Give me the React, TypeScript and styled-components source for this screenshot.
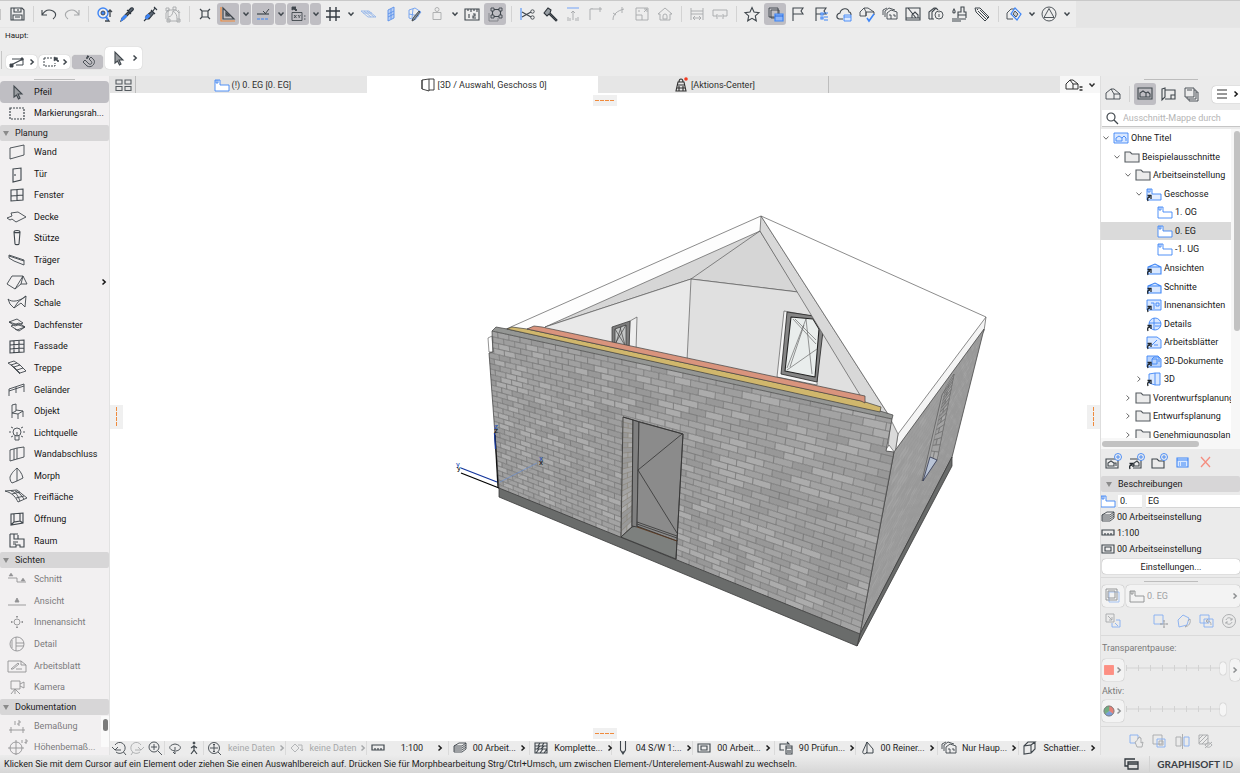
import React from "react";
import styled, { createGlobalStyle, css } from "styled-components";

/* ---------- theme values ---------- */

const INK = "#3f464c";
const BLUE = "#3f86f6";
const ORANGE = "#f08a3c";

const GlobalStyle = createGlobalStyle`
  *, *::before, *::after { box-sizing: border-box; }
  body { margin: 0; background: #ececec; }
  button, input { font: inherit; color: inherit; }
  button { border: 0; padding: 0; background: none; }
  ul { list-style: none; margin: 0; padding: 0; }
`;

/* ---------- icons ---------- */

type Shape = [d: string, stroke?: string, fill?: string, width?: number];

const ring = (x: number, y: number, r: number) =>
  `M${x - r} ${y}a${r} ${r} 0 1 0 ${2 * r} 0a${r} ${r} 0 1 0 ${-2 * r} 0z`;

const storey = "M3 5h5v5h9v6H3zM4 5v3h2V5";
const folder = "M3 5h5l2 2h7v8H3z";
const alias: Shape = ["M4 17c-1-3 0-4 2-4M3.500 11.500h3.500v3.500", "#20262c", undefined, 1.3];
const cube = "M4 8l7-1v8l-7 1zM4 8l4-4h7l-4 3M15 4v7l-4 4";
const layers = "M4 8l5-3h7l-4 3zM4 8v2h8l4-3V5M4 10v2h8l4-3V7M4 12v2h8l4-3V9";

const ICONS: Record<string, Shape[]> = {
  save: [["M4 4h11l2 2v10H4zM7 4v4h7V4M6 16v-5h9v5M8 13h5M11 5v2", undefined, undefined, 1.1]],
  undo: [["M3 6v5h5M3 11C6 6 10 5 14 7s3 6 0 8", undefined, undefined, 1.1]],
  redo: [["M17 6v5h-5M17 11C14 6 10 5 6 7s-3 6 0 8", undefined, undefined, 1.1]],
  find: [[ring(9, 9, 5), BLUE, undefined, 1.4], [ring(9, 9, 2), INK, BLUE], ["M12 13l3 4h-4M16 13V6M14 8l2-2 2 2", INK, undefined, 1.3], ["M12 13l2 3", BLUE, undefined, 2]],
  pipette: [["M14 4c2-1 3 1 2 2l-3 3-2-2zM10 6l4 4M11 8l2 1-6 6-3 2 1-3z", "#2f3740", "#5c6773", 1.1], ["M8 11l2 1-4 4-2 1 1-3z", BLUE, BLUE]],
  syringe: [["M14 3l3 3M15 4l-2 3M11 6l4 4M12 7l2 2-5 6-3 0-2 2 2-2 0-3z", "#2f3740", "#5c6773", 1.1], ["M8 10l2 2-3 3-2-1z", BLUE, BLUE]],
  arrange: [["M5 6h8l3 3v8H5zM5 6L3 9v6M3 4h3v3H3zM10 3h3v3h-3zM15 6l2 3M14 15h3v3h-3zM4 15h3v3H4zM5 13c3 0 5-3 5-6 3 2 4 4 4 8"]],
  snap: [["M7 7h6v6H7zM7 7L5 5M13 7l2-2M7 13l-2 2M13 13l2 2", undefined, undefined, 1.2]],
  triangle: [["M5 15V4l11 11zM8 12V9l3 3z", undefined, undefined, 1.2], ["M3 3v14h14", ORANGE, undefined, 1.2]],
  guide: [["M4 10h12", undefined, undefined, 1.2], ["M12 10l4-5M10 7l3 3", undefined, undefined, 1], ["M4 15h12", BLUE, undefined, 1.2]],
  coord: [["M4 8.500h10v8H4zM6 11l2.500 3M8.500 11L6 14M10 11l1.200 1.500L12.500 11M11.200 12.500V14M16 12h1.500M16 15h1.500"], ["M4 3l4 0-1 1 2 2-1 1-2-2-2 1z", INK, INK]],
  grid: [["M7 3v14M13 3v14M3 7h14M3 13h14", "#343b42", undefined, 1.4]],
  plane: [["M3 7h8l7 6h-8zM6 7l7 6M9 7l7 6M5 9h9", "#94b6ea"]],
  planeV: [["M7 6l6-3v11l-6 3zM7 10l6-3M7 13l6-3M10 5v10", "#5990ea", "#bad0f5"]],
  planeEdit: [["M5 6l6-2 6 4-6 8-6-2zM5 10l10 2M9 5l-1 9", "#6d9ff0"], ["M16 8l-6 8-2 1 1-3 6-7z", INK, "#8592a0"]],
  weight: [[ring(10, 5.5, 2), "#a9abad"], ["M6 8.500h8v7H6z", "#a9abad"]],
  ruler: [["M3 5h14v11H3zM6 5v2M9 5v3M12 5v2M15 5v3M7 10v4M11 10h2v2h-2v2h3", undefined, undefined, 1.1]],
  nodes: [["M4 9v8h9v-3", "#7f8286"], ["M7.500 5.500h8v7h-8z", INK, undefined, 1.1], ["M6 4h3v3H6zM14 4h3v3h-3zM14 11h3v3h-3zM6 11h3v3H6z", INK, "#bfbec3"]],
  cut: [["M4 4v12", BLUE, undefined, 1], ["M5 8l9 5M5 13l9-5", undefined, undefined, 1.2], [ring(15.5, 7.5, 1.7)], [ring(15.5, 13.5, 1.7)]],
  hammer: [["M4 9l4-5 3 2-1 3 7 7-1 1-7-7-2 2z", "#2d3339", "#9aa0a6", 1.1]],
  align: [["M4 4h12", "#8fb4f4", undefined, 1.3], ["M10 16V7M8 9l2-2 2 2M5 13v4M7 14v3M13 14v3M15 13v4"]],
  corner: [["M4 16V5h12M6 5v-1M14 3v5"]],
  curve: [["M4 16c0-6 4-9 11-11M13 3v6M4 9l3 2"]],
  resize: [["M4 4h12v12H4zM4 11h6v5M12 8l3-3M15 8V5h-3M8 7H6"]],
  home: [["M3 10l7-6 7 6-2 0v6H5v-6zM10 10a2 2 0 0 1 2 2v3H8v-3a2 2 0 0 1 2-2"]],
  dimH: [["M4 4v12M16 4v12M4 7h12M4 10h12M6 14h8M8 12l-2 2 2 2M12 12l2 2-2 2"]],
  dimBox: [["M3 6h14v6h-4M3 6v6h4M7 10v5M13 10v5M8 12h4"]],
  star: [["M10 3.500l2 4.500 5 .6-3.700 3.300 1 4.900L10 14.300l-4.300 2.500 1-4.900L3 8.600 8 8z", undefined, undefined, 1.1]],
  stack: [["M4 4h9v9H4zM6 6h8v8H6z"], ["M10 10h8v7h-8z", BLUE, "#8db5f7", 1.2], ["M10 12h8", "#1f62d8"]],
  flag: [["M5 17V4h10l-2 3 2 3H5", undefined, undefined, 1.1]],
  flagList: [["M5 17V4h10l-2 3 2 3H5", undefined, undefined, 1.1], ["M10 9h2v2h-2zM13 9h4M10 13h2v2h-2zM13 13h4M13 16h4", BLUE, "#fff", 1.2]],
  cloud: [["M9 15H5c-3-1-3-5 1-6 1-5 8-6 9-1 2 0 2 2 2 3", undefined, undefined, 1.1], ["M10 11h7v6h-7zM10 13h7", BLUE, "#dce9ff"]],
  houseCheck: [["M3 12V8l4-4h4l6 4v3M3 12h6V8L7 4M9 8h8M9 12V8"], ["M10 14l2 3 5-7", BLUE, undefined, 1.6]],
  houses: [["M7 15V9l4-3 6 2v7zM9 11h2v4M13 11h2v2M5 13V7l4-3 6 2M3 11V6l4-2"]],
  frame: [["M3 4h14v12H3zM3 14h14M5 4l8 10M9 14v-3l3-3 3 3v3", undefined, undefined, 1.1]],
  info: [["M3 15V8l5-4h2l2 2M6 15V8l4-4M3 15h5", undefined, undefined, 1.1], [ring(13, 11, 4), undefined, "#ececec"], ["M13 10v3M13 8.500v.5"]],
  paint: [["M5 5c-2 3-1 4 0 4s2-1 0-4zM12 3h3v5h2v3H9V8h3zM9 11v3M17 11v3M3 15h14M3 17h9", undefined, undefined, 1.1]],
  tag: [["M3 4h5l9 9-4 4-9-9zM6 7l8 8M8 6l8 8M5 5l1 1", undefined, undefined, 1]],
  view3d: [["M3 15V9l4-4h3M3 15h6"], ["M11 4l6 6-4 6-6-6z", BLUE, undefined, 1.2], ["M11 7l3 3-2 3-3-3z", INK, "#c3cad3"]],
  circleA: [[ring(10, 10, 7)], ["M10 4.500l5 9H5z"]],
  selPoly: [["M4 13l12-6", undefined, undefined, 1.3], ["M5 7h11v6H9", undefined, undefined, 1], ["M3 12h3v3H3zM14 6h2v2h-2z", INK, INK]],
  selRect: [["M4 6h9M4 6v8h11v-3", undefined, undefined, 1], ["M14 5l4 1-1 1 2 2-1 1-2-2-2 1z", INK, INK, 0.5]],
  magnet: [["M13 5l2 2c4 3-1 10-6 7L5 10l2-2 4 4c2 1 4-1 2-3l-2-2z"], ["M9 4l2 1M8 6l2 0", INK, undefined, 1.4]],
  arrow: [["M7 4v11l2.500-2 2 4 1.500-1-2-4h4z", INK, "#9a9da1", 1.1]],
  marquee: [["M3 5h14v11H3z", undefined, undefined, 1.2]],
  wall: [["M3 6l14-3v10L3 17z"]],
  door: [["M6 5l8-1v12l-8 2zM8 10v2", undefined, undefined, 1.1]],
  window: [["M4 5l12-1v11L4 16zM10 4v12M4 11l12-1", undefined, undefined, 1.1]],
  slab: [["M0 11l5-2-1-3 7-1 8 5-10 5-4-3-2 1z"]],
  column: [["M7 4c0-2 6-2 6 0l-1 12c0 1-4 1-4 0zM7 4c0 1 6 1 6 0", undefined, undefined, 1.1]],
  beam: [["M2 5l15 5v5L7 11 2 8zM2 6l15 5"]],
  roof: [["M5 4h11l4 8h-6l-6 5-8-5zM16 4l-8 13M16 4l-2 8"]],
  shell: [["M1 6c4 4 12 2 18-3l-1 11-4-4-7 5-4-4zM19 3l-8 6-4 6"]],
  skylight: [["M2 7l8-3 6 4-8 3zM4 11l8-3 6 4-8 3zM8 14l4 2 6-4M2 7l16 5"]],
  curtain: [["M3 5l14-1v12L3 17zM7 5v12M12 5v12M3 9l14-1M3 13l14-1", undefined, undefined, 1.1]],
  stair: [["M1 5l6-2 3 2-6 2zM4 7l3 2 6-2-3-2M7 9l3 3 6-2-3-3M10 12l3 3 6-2-3-3M4 7l9 9"]],
  railing: [["M2 16V9l15-5v8M2 11l15-5M9 13V7"]],
  object: [["M5 4l4-1v7l-4 2zM5 12l6 1 5-3-7-1M5 12v5M11 13v5M16 10v6"]],
  lamp: [[ring(10, 9, 4)], ["M8 13v4h4v-4M10 9v4M2 9h2M16 9h2M4 4l2 1M16 4l-2 1M4 14l2-1M16 14l-2-1"]],
  wallEnd: [["M3 6l7-2v11l-7 2zM10 4l7-1v10l-7 2M7 5v11"]],
  morph: [["M3 11c2-5 5-7 7-9v13l-5 2c-2-2-2-4-2-6zM10 2c2 2 5 5 6 10l-6 3"]],
  mesh: [["M-2 4l12-1 10 8-9 4c-2-4-5-9-13-11zM4 4c5 1 7 5 9 10M8 4c4 1 6 4 9 8M5 7l8-2M9 11l8-2"]],
  opening: [["M4 5l12-1v10L4 16zM7 5v8l6-1V4M4 16l3-3M13 12l3 2", undefined, undefined, 1.1]],
  zone: [["M3 3h4v5h4V4M7 3h4M11 8h6v8h-4v-2H9v2H3V3M6 11h5M6 13h3", undefined, undefined, 1.1]],
  section: [["M1 9h9v4h9"], ["M2 7l2-3 2 3zM14 12l2-3 2 3z", "#929294", "#929294", 0.5]],
  elevation: [["M1 14h18"], ["M8 11l2-4 2 4z", "#929294", "#929294"]],
  interior: [[ring(10, 10, 3)], ["M10 4l1 1H9zM10 16l1-1H9zM4 10l1-1v2zM16 10l-1-1v2z"]],
  detail: [[ring(10, 10, 7)], ["M9 3v14M9 9h8M9 12h8M5 6v8"]],
  worksheet: [["M1 5h13l5 4v7H1zM14 5v4h5M4 13l7-6 1 1-6 5zM9 13h6"]],
  camera: [["M4 4h9v8H4zM13 7l4-2v6l-4-2M8 12l-4 5M8 12l5 5M8 12v5"]],
  dim: [["M2 14h16M4 11v6M16 11v6M8 5v4M11 5h2v2h-2v2h2"]],
  levelDim: [[ring(9, 11, 6)], ["M9 3v16M1 11h16M15 3v3M18 3h2v2h-2v1h2"]],
  overview: [["M3 5h6v4H3zM12 5h6v4h-6zM3 11.500h6v4H3zM12 11.500h6v4h-6z", undefined, undefined, 1.1]],
  storey: [[storey, BLUE, "#fff"]],
  storeyPlain: [[storey]],
  storeyAlias: [[storey, BLUE, "#e4eeff"], alias],
  box3d: [["M4 5l7-1v12l-7-2zM11 4h5v11h-5M4 5v9"]],
  tower: [["M7 7h6l2 9H5zM8 7c0-4 4-4 4 0M6 10h8M6 13h8M8 16v-5M12 16v-5", undefined, undefined, 1.1], [ring(15, 4, 1), "#f33a20", "#f33a20", 1.6]],
  houseList: [["M2 14V9l4-4h3l5 4v5zM9 14V9L6 5M9 9h5", undefined, undefined, 1], ["M15.500 12h3M15.500 15h3", undefined, undefined, 1.4]],
  house: [["M3 15V9l5-4h3l6 5v5zM11 15v-5L8 5M11 10h6"]],
  houseFrame: [["M3 4h14v11H3zM5 13V9l3-2 3 2v4zM11 9l2-1 2 2v3h-4", undefined, undefined, 1.1]],
  layout: [["M4 5l3-1v9l-3 3zM7 6h10v9H7M13 11h4v4h-4z", undefined, undefined, 1.1]],
  books: [["M4 4h9v9H4zM6 13v2h9V6h-2M8 15v2h9V8h-2M6 6h5"]],
  menu: [["M5 6h10M5 10h10M5 14h10"]],
  search: [[ring(9, 9, 4), undefined, undefined, 1.2], ["M12 12l4 4", undefined, undefined, 1.3]],
  project: [["M3 5h14v10H3z", BLUE, "#d9e8ff"], ["M5 13v-3l3-2 3 2v3zM11 10l2-2 2 2v3", BLUE]],
  folder: [[folder, undefined, "#ececec", 1.1]],
  view: [["M4 9l7-3 6 3v7H4zM4 9h13", BLUE, "#d9e8ff", 1.1], alias],
  interiorView: [["M3 5h14v10H3zM7 8h3v6M12 8h3v3h-3z", BLUE, "#d9e8ff"], alias],
  detailView: [[ring(11, 10, 6), BLUE, "#d9e8ff"], ["M10 4v12M5 9h12M11 12h6", BLUE], alias],
  sheetView: [["M3 5h10l4 3v8H3zM8 13l5-5M10 13h4", BLUE, "#d9e8ff"], alias],
  doc3d: [["M3 5h11l3 3v8H3zM8 8h5v5H8zM8 8l2-2h5v5", BLUE, "#b9d3fc"], alias],
  cubeView: [["M5 5l6-1v12l-6-2zM11 4h5v12h-5", BLUE, "#d9e8ff"], alias],
  saveView: [["M3 7h12v9H3zM5 14v-3l3-2 3 2v3zM11 11l2 0v3", undefined, undefined, 1.1], [ring(15, 5, 3.5), BLUE, "#ececec"], ["M15 3v4M13 5h4", BLUE]],
  cloneView: [["M4 7h11v9H7M8 14v-3l3-2 2 2v3z", undefined, undefined, 1.1], alias, [ring(15, 5, 3.5), BLUE, "#ececec"], ["M15 3v4M13 5h4", BLUE]],
  addFolder: [["M3 7h5l2 2h5v7H3z", undefined, undefined, 1.1], [ring(15, 5, 3.5), BLUE, "#ececec"], ["M15 3v4M13 5h4", BLUE]],
  props: [["M5 6h11v9H5zM5 8h11M7 11h1M9 11h5M7 13h1M9 13h5", BLUE, "#d9e8ff", 1.1]],
  remove: [["M6 5l9 10M15 5L6 15", "#f58e80", undefined, 1.3]],
  layers: [[layers]],
  scale: [["M4 7h12v5H4zM7 12v-2M10 12v-2M13 12v-2", undefined, undefined, 1.2]],
  structure: [["M4 6h12v8H4zM7 8h6v4H7z", undefined, undefined, 1.1]],
  trace: [["M6 6h10v10H6z", "#9cbdf2"], ["M3 3h11v11H3zM5 5h7v7H5z"]],
  traceRef: [["M3 3h8v8H3zM5 5l4 4M9 6v3H6"], ["M9 12v4h8V9h-4M12 12l3 3", "#85aef2"]],
  traceMove: [["M4 4h9v9H4z", "#85aef2"], ["M14 9v8M10 13h8M13 10h2M13 16h2M11 12v2M17 12v2"]],
  traceRotate: [["M5 9l5-5 6 3-2 7-8 2z", "#85aef2"], ["M17 8c1 4-1 7-5 8l2-2M17 8l-2 2"]],
  traceSwap: [["M4 4h9v8H4zM8 8h9v8H8z", "#85aef2"], ["M15 14c0-4-2-4-5-4l2-2M10 10l2 2"]],
  refresh: [[ring(10, 10, 6.5)], ["M7 9c1-3 5-3 6 0M13 7v2h-2M13 11c-1 3-5 3-6 0M7 13v-2h2"]],
  hand: [["M4 4h8v8H4z", "#85aef2"], ["M9 11c2 0 2-3 3-3v-1h1v-1h1v1h1v5l2-1-1 5H11z", undefined, "#ececec"]],
  overlap: [["M4 4h9v9H4z"], ["M8 8h8v8H8z", "#85aef2"], ["M10 10h4v4h-4z"]],
  mirror: [["M4 6h5v9H4z"], ["M12 6h5v9h-5z", "#85aef2"], ["M10.500 3v15"]],
  hatchEye: [["M4 4h9v9H4zM4 8l4-4M4 12l8-8M7 13l6-6M10 14c2-3 5-3 7 0-2 3-5 3-7 0M10 17l7-6"]],
  swatch: [["M5.500 5.500h9v9h-9z", "#fd9084", "#fd9084"]],
  pie: [["M10 10V5a5 5 0 0 1 4 8z", "#e58077", "#e58077", 0.5], ["M10 10l4 3a5 5 0 0 1-8 0z", "#7b9ed8", "#7b9ed8", 0.5], ["M10 10l-4 3a5 5 0 0 1 4-8z", "#72ad83", "#72ad83", 0.5], [ring(10, 10, 5), "#777"]],
  zoomBack: [["M6 7a5.500 5.500 0 1 1 1 7M14.500 14l2.500 3"], ["M3 9l3 3 3-3M6 12h6"]],
  zoomFwd: [["M14 7a5.500 5.500 0 1 0-1 7M6 14l-2 3"], ["M17 9l-3 3-3-3M14 12H8"]],
  zoomIn: [[ring(9, 9, 5)], ["M9 6v6M6 9h6M13 13l4 4"]],
  orbit: [["M10 13c-7-1-7-6 0-7 7 1 7 6 1 7M10 9v7M8 14l2 2"]],
  walk: [[ring(10, 5, 1), INK, INK], ["M10 7v5l-3 4M10 12l3 4M7 10l3-2 3 2", undefined, undefined, 1.2]],
  zoomFit: [[ring(9, 10, 5.5), INK], ["M13 14l3 3M9 6v8M5 10h8M8 7l1-1 1 1M8 13l1 1 1-1", INK]],
  tilt: [["M4 10l4-4 4 4-4 4zM11 7l4 0v6M13 11l2 2 1-2"]],
  hatch: [["M4 5h12v10H4zM4 8h12M4 11h12M6 11l3-3M10 11l3-3M5 15l3-4M9 15l3-4M13 15l3-4M7 8l2-3M11 8l2-3", undefined, undefined, 1.1]],
  pen: [["M7.500 3v9l2.500 4 2.500-4V3M10 13v3", undefined, undefined, 1.1]],
  override: [["M7 6h6l-2-2M7 6l-3 0v6h4M10 8h6v8h-6zM10 10h6M12 12v3M14 12v3", undefined, undefined, 1.1]],
  reno: [["M6 13L10 4l6 7v4H9M10 4v11M6 13c-1 3 2 4 4 1", undefined, undefined, 1]],
  style: [[cube, undefined, undefined, 1.1]],
  windows: [["M7 8h10v7H7zM7 10h10M14 5H4v7h3", "#32383e", undefined, 1.3]],
};

const DASHES: Record<string, string> = { marquee: "2 1", selRect: "2 1" };

const Glyph = styled.svg`
  flex: none;
  display: block;
  width: 20px;
  height: 20px;
  overflow: visible;
`;

function Icon({ name }: { name: string }) {
  return (
    <Glyph viewBox="0 0 20 20" fill="none" aria-hidden="true">
      {(ICONS[name] ?? []).map(([d, stroke, fill, width], i) => (
        <path
          key={i}
          d={d}
          stroke={stroke ?? "currentColor"}
          fill={fill ?? "none"}
          strokeWidth={width ?? 0.9}
          strokeDasharray={i === 0 ? DASHES[name] : name === "guide" && i === 2 ? "3 1" : undefined}
        />
      ))}
    </Glyph>
  );
}

const ChevronSvg = styled.svg<{ $soft?: boolean }>`
  flex: none;
  display: block;
  width: 8px;
  height: 8px;
  fill: none;
  stroke: ${(p) => (p.$soft ? "#6d6d6d" : "currentColor")};
  stroke-width: ${(p) => (p.$soft ? 1 : 1.5)};
`;

function Chevron({ down, soft }: { down?: boolean; soft?: boolean }) {
  return (
    <ChevronSvg viewBox="0 0 8 8" $soft={soft} aria-hidden="true">
      <path d={down ? "M1.500 2.500L4 5.200l2.500-2.700" : "M2.500 1.500L5.200 4 2.500 6.500"} />
    </ChevronSvg>
  );
}

/* ---------- shell ---------- */

const Shell = styled.div`
  display: flex;
  flex-direction: column;
  height: 100vh;
  overflow: hidden;
  font-family: Roboto, "Liberation Sans", sans-serif;
  font-size: 9px;
  font-weight: 400;
  line-height: 12px;
  color: #1c1c1c;
  background: #ececec;
  border-top: 1px solid #c9c9c9;
`;

const Toolbar = styled.header`
  display: flex;
  flex: none;
  height: 26px;
  background: #e5e5e5;
`;

const ToolRow = styled.div`
  display: flex;
  align-items: center;
  gap: 1px;
  padding-right: 4px;
  background: #ededed;
  color: ${INK};
`;

const Grip = styled.span<{ $tall?: boolean }>`
  flex: none;
  width: 1px;
  height: ${(p) => (p.$tall ? 18 : 11)}px;
  margin-right: ${(p) => (p.$tall ? 2 : 4)}px;
  background: #c6c6c6;
`;

const ToolButton = styled.button<{ $on?: boolean; $off?: boolean; $slim?: boolean }>`
  display: flex;
  flex: none;
  align-items: center;
  justify-content: center;
  width: ${(p) => (p.$slim ? 11 : 22)}px;
  height: 22px;
  border-radius: 3px;
  background: ${(p) => (p.$on ? "#bfbec3" : "transparent")};
  color: ${(p) => (p.$off ? "#a6a8aa" : INK)};
`;

const Divider = styled.span`
  display: flex;
  flex: none;
  justify-content: center;
  width: 8px;
  height: 16px;
  &::after {
    content: "";
    width: 1px;
    background: #d3d3d3;
  }
`;

const InfoBox = styled.section`
  display: flex;
  flex: none;
  flex-direction: column;
  gap: 5px;
  height: 49px;
  padding: 2px 0 0 5px;
  border-top: 1px solid #e6e6e6;
  font-size: 8px;
`;

const InfoTools = styled.div`
  display: flex;
  align-items: flex-end;
  gap: 2px;
  margin-left: -4px;
`;

const InfoButton = styled.button<{ $on?: boolean; $large?: boolean }>`
  display: flex;
  align-items: center;
  justify-content: center;
  gap: ${(p) => (p.$large ? 3 : 1)}px;
  width: ${(p) => (p.$large ? 37 : 31)}px;
  height: ${(p) => (p.$large ? 22 : 14)}px;
  border-radius: 4px;
  background: ${(p) => (p.$on ? "#bfbec3" : "#fff")};
  box-shadow: 0 0 1px rgba(0, 0, 0, 0.3);
  color: ${INK};
`;

const Workspace = styled.div`
  display: flex;
  flex: 1;
  min-height: 0;
`;

/* ---------- toolbox ---------- */

const Toolbox = styled.nav`
  position: relative;
  display: flex;
  flex: none;
  flex-direction: column;
  width: 110px;
  overflow: hidden;
  background: #f2f0f1;
  border-right: 1px solid #e2e2e2;
`;

const Handle = styled.div<{ $w: number; $gap?: number }>`
  flex: none;
  width: ${(p) => p.$w}px;
  height: 1px;
  margin: 3px auto ${(p) => p.$gap ?? 1}px;
  background: #bdbdbd;
`;

const ToolList = styled.ul`
  display: flex;
  flex: 1;
  flex-direction: column;
  margin-bottom: -3px;
`;

const ToolItem = styled.li`
  display: flex;
  flex: 1 1 0;
  min-height: 0;
`;

const ToolEntry = styled.button<{ $on?: boolean; $off?: boolean }>`
  display: flex;
  flex: 1;
  align-items: center;
  gap: 7px;
  padding: 0 1px 0 7px;
  border-radius: 4px;
  text-align: left;
  white-space: nowrap;
  background: ${(p) => (p.$on ? "#bfbec3" : "transparent")};
  color: ${(p) => (p.$off ? "#7b7a7c" : "#141414")};
  svg:first-child {
    color: ${(p) => (p.$off ? "#929294" : INK)};
  }
  svg:last-child:not(:first-child) {
    margin-left: auto;
  }
`;

const GroupHeader = styled.h2<{ $inset?: boolean }>`
  display: flex;
  flex: none;
  align-items: center;
  gap: 6px;
  height: 16px;
  margin: 1px 0 0;
  padding-left: ${(p) => (p.$inset ? 5 : 3)}px;
  border-radius: 2px;
  font-size: 9px;
  font-weight: 400;
  background: #d7d6d7;
  &::before {
    content: "";
    width: 0;
    border: 3px solid transparent;
    border-top: 5px solid #8b8b8b;
    border-bottom: 0;
  }
`;

const ToolScroll = styled.div`
  position: absolute;
  right: 0;
  bottom: 8px;
  width: 8px;
  height: 31px;
  padding: 3px 1px 3px 2px;
  background: #fafafa;
  &::after {
    content: "";
    display: block;
    height: 12px;
    border-radius: 3px;
    background: #7b7b7b;
  }
`;

type Tool = [label: string, icon: string];
const PLAN: Tool[] = [
  ["Wand", "wall"], ["Tür", "door"], ["Fenster", "window"], ["Decke", "slab"], ["Stütze", "column"],
  ["Träger", "beam"], ["Dach", "roof"], ["Schale", "shell"], ["Dachfenster", "skylight"], ["Fassade", "curtain"],
  ["Treppe", "stair"], ["Geländer", "railing"], ["Objekt", "object"], ["Lichtquelle", "lamp"],
  ["Wandabschluss", "wallEnd"], ["Morph", "morph"], ["Freifläche", "mesh"], ["Öffnung", "opening"], ["Raum", "zone"],
];
const VIEWS: Tool[] = [
  ["Schnitt", "section"], ["Ansicht", "elevation"], ["Innenansicht", "interior"],
  ["Detail", "detail"], ["Arbeitsblatt", "worksheet"], ["Kamera", "camera"],
];
const DOCS: Tool[] = [["Bemaßung", "dim"], ["Höhenbemaß...", "levelDim"]];

function ToolRows({ tools, off }: { tools: Tool[]; off?: boolean }) {
  return (
    <>
      {tools.map(([label, icon]) => (
        <ToolItem key={label}>
          <ToolEntry $on={label === "Pfeil"} $off={off}>
            <Icon name={icon} />
            <span>{label}</span>
            {label === "Dach" && <Chevron />}
          </ToolEntry>
        </ToolItem>
      ))}
    </>
  );
}

/* ---------- centre ---------- */

const Centre = styled.main`
  display: flex;
  flex: 1;
  flex-direction: column;
  min-width: 0;
`;

const TabBar = styled.div`
  display: flex;
  flex: none;
  height: 17px;
  background: #e4e4e4;
  color: #2e2e2e;
`;

const TabOverview = styled.button`
  display: flex;
  align-items: center;
  justify-content: center;
  width: 26px;
  border-right: 1px solid #bdbdbd;
  color: #555b60;
`;

const Tab = styled.button<{ $on?: boolean; $end?: boolean }>`
  display: flex;
  flex: 1 1 0;
  align-items: center;
  justify-content: center;
  font-size: 9px;
  background: ${(p) => (p.$on ? "#fff" : "#e6e6e6")};
  border-right: ${(p) => (p.$end ? "1px solid #bdbdbd" : "0")};
`;

const TabRest = styled.div`
  flex: 1 1 0;
`;

const TabMenu = styled.button`
  display: flex;
  align-items: center;
  gap: 4px;
  width: 40px;
  padding-left: 4px;
  background: #f7f7f7;
`;

const Viewport = styled.div`
  position: relative;
  flex: 1;
  min-height: 0;
  background: #fff;
`;

const Scene = styled.svg`
  display: block;
  width: 100%;
  height: 100%;
`;

const Tabber = styled.span<{ $side: "top" | "bottom" | "left" | "right" }>`
  position: absolute;
  display: flex;
  align-items: center;
  justify-content: center;
  background: #f0f0f0;
  ${(p) =>
    p.$side === "top" || p.$side === "bottom"
      ? css`
          ${p.$side}: 2px;
          left: calc(50% - 12px);
          width: 24px;
          height: 11px;
          &::after {
            content: "";
            width: 20px;
            height: 1px;
            background: repeating-linear-gradient(to right, ${ORANGE} 0 4px, transparent 4px 5px);
          }
        `
      : css`
          ${p.$side}: 0;
          top: calc(50% - 12px);
          width: 13px;
          height: 24px;
          &::after {
            content: "";
            width: 1px;
            height: 20px;
            background: repeating-linear-gradient(to bottom, ${ORANGE} 0 4px, transparent 4px 5px);
          }
        `}
`;

const QuickBar = styled.div`
  display: flex;
  flex: none;
  height: 14px;
  background: #ececec;
  color: ${INK};
`;

const QuickNav = styled.div<{ $w: number }>`
  display: flex;
  flex: none;
  align-items: center;
  justify-content: space-around;
  width: ${(p) => p.$w}px;
  border-right: 1px solid #dadada;
`;

const NavButton = styled.button<{ $off?: boolean }>`
  display: flex;
  align-items: center;
  width: 17px;
  height: 14px;
  justify-content: center;
  color: ${(p) => (p.$off ? "#a9abad" : INK)};
`;

const QuickOption = styled.button<{ $off?: boolean; $centre?: boolean }>`
  display: flex;
  flex: 1 1 0;
  align-items: center;
  min-width: 0;
  gap: 3px;
  padding: 0 4px 0 1px;
  white-space: nowrap;
  border-right: 1px solid #dadada;
  color: ${(p) => (p.$off ? "#a6a8aa" : "#1c1c1c")};
  &:last-child { border-right: 0; }
  span {
    flex: 1;
    text-align: ${(p) => (p.$centre ? "center" : "left")};
  }
  svg:first-child { color: ${(p) => (p.$off ? "#aeb0b2" : INK)}; }
`;

/* ---------- 3D model drawing ---------- */

type Pt = [number, number];

/** Maps the unit square onto a quad (top-left, top-right, bottom-right, bottom-left). */
function perspective([a, b, c, d]: Pt[]) {
  const dx1 = b[0] - c[0], dx2 = d[0] - c[0], dx3 = a[0] - b[0] + c[0] - d[0];
  const dy1 = b[1] - c[1], dy2 = d[1] - c[1], dy3 = a[1] - b[1] + c[1] - d[1];
  const det = dx1 * dy2 - dx2 * dy1;
  const g = (dx3 * dy2 - dx2 * dy3) / det;
  const h = (dx1 * dy3 - dx3 * dy1) / det;
  return (u: number, v: number): Pt => {
    const w = g * u + h * v + 1;
    return [
      ((b[0] - a[0] + g * b[0]) * u + (d[0] - a[0] + h * d[0]) * v + a[0]) / w,
      ((b[1] - a[1] + g * b[1]) * u + (d[1] - a[1] + h * d[1]) * v + a[1]) / w,
    ];
  };
}

const GREYS = ["#a3a3a3", "#9e9e9e", "#acacac", "#989898", "#a0a0a0"];

function bricks(quad: Pt[], rows: number, cols: number) {
  const map = perspective(quad);
  const groups: string[] = GREYS.map(() => "");
  for (let r = 0; r < rows; r++) {
    const shift = r % 2 ? 0.5 : 0;
    for (let c = -1; c < cols; c++) {
      const u0 = Math.max(0, (c + shift) / cols);
      const u1 = Math.min(1, (c + 1 + shift) / cols);
      if (u1 <= u0) continue;
      const pts = [map(u0, r / rows), map(u1, r / rows), map(u1, (r + 1) / rows), map(u0, (r + 1) / rows)];
      const seed = Math.abs(Math.sin(r * 12.9898 + c * 78.233) * 43758.5453);
      const pick = Math.floor((seed - Math.floor(seed)) * GREYS.length);
      groups[pick] += "M" + pts.map((p) => `${p[0].toFixed(1)} ${p[1].toFixed(1)}`).join("L") + "z";
    }
  }
  return groups;
}

const FRONT = bricks([[487, 330], [900, 417], [860, 634], [499, 489]], 31, 26);
const SIDE = bricks([[894, 452], [984, 329], [952, 457], [860, 634]], 31, 18);
const REVEAL = bricks([[623, 417], [633, 420], [632, 526], [621, 537]], 22, 1);
const SIDE_REVEAL = bricks([[946, 387], [954, 374], [937, 460], [930, 457]], 16, 1);

function Bricks({ groups, line, width }: { groups: string[]; line: string; width: number }) {
  return (
    <>
      {groups.map((d, i) => (
        <path key={i} d={d} fill={GREYS[i]} />
      ))}
      <path d={groups.join("")} fill="none" stroke={line} strokeWidth={width} />
    </>
  );
}

function Model() {
  return (
    <Scene viewBox="110 93 990 648" role="img" aria-label="3D">
      <defs>
        <clipPath id="front">
          <path d="M492 331L892 419L886 451L894 452L860 634L499 489L489 353L493 352z" />
        </clipPath>
      </defs>
      <g stroke="#5a5a5a" strokeWidth="0.7" strokeLinejoin="round">
        <path d="M761 216L504 330L545 327L760 231z" fill="#fdfdfd" stroke="none" />
        <path d="M545 327L760 231L798 292L691 279z" fill="#d6d6d6" />
        <path d="M545 327L691 279L687 361z" fill="#e9e9e9" stroke="none" />
        <path d="M691 279L798 292L866 400L687 361z" fill="#e0e0e0" stroke="none" />
        <path d="M761 216L504 330M545 327L691 279L687 361M691 279L798 292M760 231L691 279" fill="none" />
        {/* left window */}
        <path d="M630 321L637 317L636 350L629 348z" fill="#eeeeee" />
        <path d="M612 327L630 321L629 349L612 344z" fill="#7c7c7c" stroke="#333" />
        <path d="M615 329L626 325L626 347L615 344z" fill="#c4c6c6" stroke="#333" />
        <path d="M615 329L626 347M626 325L615 344M621 327L616 343M620 327L625 345" stroke="#444" fill="none" />
        {/* right window */}
        <path d="M784 311L822 318L817 385L777 377z" fill="#f5f5f5" />
        <path d="M787 312L814 316L823 331L817 382L781 374z" fill="#858585" stroke="#222" strokeWidth="0.800" />
        <path d="M791 317L813 319L819 329L815 377L785 371z" fill="#e9edec" stroke="#222" strokeWidth="1.100" />
        <path d="M793 319L816 344M806 319L787 368M806 319L812 374M817 349L787 370M795 319L816 340M804 325L790 367" fill="none" stroke="#6c6c6c" />
        {/* roof */}
        <path d="M761 216L888 414L880 413L865 403L860 395L760 231z" fill="#d8d8d8" />
        <path d="M761 216L986 317L898 434L888 414z" fill="#fff" stroke="none" />
        <path d="M888 414L761 216L986 317" fill="none" />
        <path d="M986 317L984 331L895 453L898 434z" fill="#f4f4f4" />
        <path d="M891 420L898 434L895 453L888 447z" fill="#dadada" />
        <path d="M885 451L889 445L895 453z" fill="#fff" />
      </g>
      {/* side wall */}
      <path d="M894 452L984 329L952 457L860 634z" fill="#9c9c9c" />
      <g opacity="0.5">
        <Bricks groups={SIDE} line="#949494" width={0.3} />
      </g>
      <path d="M954 374L942 395L922 481L937 460z" fill="#a4a4a4" stroke="#555" strokeWidth="0.700" />
      <Bricks groups={SIDE_REVEAL} line="#6e6e6e" width={0.5} />
      <path d="M930 457L937 460L923 481z" fill="#b9c4d6" stroke="#333a55" strokeWidth="0.800" />
      <path d="M894 452L984 329L952 457L860 634z" fill="none" stroke="#4c4c4c" strokeWidth="0.800" />
      <path d="M860 634L952 457L952 466L857 646z" fill="#696b6a" stroke="#3b3b3b" strokeWidth="0.800" />
      {/* front wall */}
      <path d="M488 338L492 336L493 352L489 352z" fill="#fff" stroke="#666" strokeWidth="0.700" />
      <g clipPath="url(#front)">
        <Bricks groups={FRONT} line="#777" width={0.5} />
      </g>
      <path d="M492 331L493 352L489 353L499 489M860 634L894 452L886 451L892 419" fill="none" stroke="#4c4c4c" strokeWidth="0.800" />
      <path d="M499 488L860 634L857 646L499 497z" fill="#6a6c6b" stroke="#3b3b3b" strokeWidth="0.800" />
      {/* wall layers */}
      <g stroke="#3f3f3f" strokeWidth="0.700" strokeLinejoin="round">
        <path d="M492 331L496 327L507 329L880 411L893 415L892 419z" fill="#949694" />
        <path d="M507 329L512 327L527 329L862 401L881 407L880 412z" fill="#d0b76c" />
        <path d="M527 329L534 326L542 327L865 396L865 403L861 401z" fill="#d9947d" />
      </g>
      {/* door */}
      <Bricks groups={REVEAL} line="#8a8578" width={0.4} />
      <g stroke="#333" strokeWidth="0.800" fill="none">
        <path d="M623 417L621 537L632 527L633 420z" />
        <path d="M632 527L636 526L677 540L676 559L621 537z" fill="#7d807e" />
        <path d="M633 420L639 422L637 527L632 526z" fill="#808080" />
        <path d="M639 422L683 434L677 541L637 526z" fill="#8b8b8b" />
        <path d="M682 434L638 470L677 533M637 522L677 536M637 524L677 538M623 417L683 434L676 559" />
        <path d="M637 527L677 541" stroke="#5a3418" />
      </g>
      {/* axes */}
      <g fill="none">
        <path d="M500 482L537 463" stroke="#6d8fd0" strokeWidth="0.700" />
        <path d="M500 487L538 466" stroke="#8d8d8d" strokeWidth="0.600" />
        <path d="M495 435L498 487" stroke="#111" strokeWidth="1.300" />
        <path d="M494.500 433L495.500 449M461 468L497 482" stroke="#14369c" strokeWidth="1.300" />
        <path d="M461 473L499 488" stroke="#000" strokeWidth="1.300" />
      </g>
      <g fontFamily="Roboto, sans-serif" fontSize="8" fontWeight="400" textAnchor="middle">
        <g fill="#2450b8">
          <text x="496" y="429">z</text>
          <text x="458" y="467">y</text>
          <text x="541" y="461">x</text>
        </g>
        <g fill="#111">
          <text x="496" y="433">z</text>
          <text x="459" y="471">y</text>
          <text x="541" y="465">x</text>
        </g>
      </g>
    </Scene>
  );
}

/* ---------- navigator ---------- */

const Navigator = styled.aside`
  display: flex;
  flex: none;
  flex-direction: column;
  width: 140px;
  overflow: hidden;
  background: #ebebeb;
  border-left: 1px solid #dedede;
  color: #181818;
`;

const NavTabs = styled.div`
  display: flex;
  flex: none;
  align-items: center;
  gap: 1px;
  height: 29px;
  padding: 0 0 3px 1px;
`;

const NavMenu = styled.button`
  display: flex;
  flex: none;
  align-items: center;
  width: 32px;
  height: 17px;
  margin-left: 9px;
  border-radius: 4px;
  background: #fff;
  box-shadow: 0 0 1px rgba(0, 0, 0, 0.4);
`;

const SearchField = styled.label`
  display: flex;
  flex: none;
  align-items: center;
  height: 17px;
  margin-left: 1px;
  background: #fff;
  border-bottom: 1px solid #c6c6c6;
  color: ${INK};
  input {
    flex: 1;
    min-width: 0;
    padding: 0 0 0 1px;
    border: 0;
    outline: 0;
    background: transparent;
  }
  input::placeholder { color: #b5b5b5; opacity: 1; }
`;

const TreeFrame = styled.div`
  display: flex;
  flex: 1;
  min-height: 0;
  margin-top: 2px;
  background: #fff;
`;

const Tree = styled.ul`
  display: flex;
  flex: 1;
  flex-direction: column;
  min-width: 0;
  margin-bottom: -6px;
  overflow: hidden;
`;

const TreeRow = styled.li<{ $level: number; $on?: boolean }>`
  display: flex;
  flex: 1 1 0;
  align-items: center;
  min-height: 0;
  padding-left: ${(p) => 1 + p.$level * 11}px;
  white-space: nowrap;
  background: ${(p) => (p.$on ? "#dadada" : "transparent")};
  > svg { color: #555b60; }
`;

const TreeToggle = styled.span`
  display: flex;
  flex: none;
  width: 9px;
`;

const VScroll = styled.div`
  flex: none;
  width: 9px;
  padding: 2px 0 0 3px;
  background: #f7f7f7;
  &::after {
    content: "";
    display: block;
    height: 65%;
    border-radius: 3px;
    background: #c2c2c2;
  }
`;

const HScroll = styled.div`
  flex: none;
  height: 11px;
  padding: 3px 0 0 1px;
  background: #f7f7f7;
  &::after {
    content: "";
    display: block;
    width: 97px;
    height: 6px;
    border-radius: 3px;
    background: #c2c2c2;
  }
`;

const IconRow = styled.div<{ $off?: boolean; $h: number; $start?: number }>`
  display: flex;
  flex: none;
  align-items: center;
  gap: 1px;
  height: ${(p) => p.$h}px;
  padding-left: ${(p) => p.$start ?? 1}px;
  color: ${(p) => (p.$off ? "#9b9da0" : INK)};
`;

const Spacer = styled.span<{ $w: number }>`
  flex: none;
  width: ${(p) => p.$w}px;
`;

const Props = styled.div`
  display: flex;
  flex: none;
  flex-direction: column;
  gap: 4px;
  padding: 3px 0 0 1px;
`;

const PropRow = styled.div`
  display: flex;
  align-items: center;
  height: 12px;
  svg { margin: 0 -1px 0 -4px; color: ${INK}; }
`;

const Field = styled.input<{ $w?: number }>`
  flex: ${(p) => (p.$w ? "none" : 1)};
  width: ${(p) => (p.$w ? p.$w + "px" : "auto")};
  min-width: 0;
  height: 13px;
  margin: 0 4px 0 1px;
  padding: 0 2px;
  border: 0;
  border-bottom: 1px solid #d5d5d5;
  background: #fff;
  &:last-child { margin: 0; }
`;

const SettingsButton = styled.button`
  flex: none;
  height: 15px;
  margin: 4px 0 3px 1px;
  border-radius: 4px;
  background: #fff;
  box-shadow: 0 0 1px rgba(0, 0, 0, 0.5);
  text-align: center;
`;

const Rule = styled.hr`
  flex: none;
  width: 100%;
  height: 1px;
  margin: 0;
  border: 0;
  background: #dadada;
`;

const TraceRow = styled.div`
  display: flex;
  flex: none;
  align-items: center;
  gap: 2px;
  height: 22px;
  padding-left: 1px;
  color: #9b9da0;
`;

const SoftButton = styled.button<{ $w?: number; $pair?: boolean }>`
  display: flex;
  flex: ${(p) => (p.$w ? "none" : 1)};
  align-items: center;
  width: ${(p) => (p.$w ? p.$w + "px" : "auto")};
  height: 22px;
  padding: 0 1px;
  border-radius: 4px;
  background: #f3f3f3;
  box-shadow: 0 0 1px rgba(0, 0, 0, 0.4);
  color: #8c8e90;
  span { color: #a0a2a4; }
  svg:first-child { margin-left: ${(p) => (p.$pair ? -4 : 0)}px; }
  svg:last-child:not(:first-child) { margin-left: ${(p) => (p.$pair ? "-4px" : "auto")}; }
`;

const TraceLabel = styled.label`
  flex: none;
  color: #7a7a7a;
`;

const Slider = styled.input`
  flex: 1;
  min-width: 0;
  height: 14px;
  margin: 0 2px 4px 0;
  appearance: none;
  background:
    repeating-linear-gradient(to right, #d3d3d3 0 1px, transparent 1px 12px) 0 50% / 100% 6px no-repeat,
    linear-gradient(#dfdfdf, #dfdfdf) 0 50% / 100% 2px no-repeat;
  &::-webkit-slider-thumb {
    appearance: none;
    width: 6px;
    height: 13px;
    border-radius: 3px;
    background: #f5f5f5;
    box-shadow: 0 0 1px rgba(0, 0, 0, 0.4);
  }
`;

type Node = [level: number, label: string, icon: string, toggle?: "open" | "closed"];
const TREE: Node[] = [
  [0, "Ohne Titel", "project", "open"],
  [1, "Beispielausschnitte", "folder", "open"],
  [2, "Arbeitseinstellung", "folder", "open"],
  [3, "Geschosse", "storeyAlias", "open"],
  [4, "1. OG", "storey"],
  [4, "0. EG", "storey"],
  [4, "-1. UG", "storey"],
  [3, "Ansichten", "view"],
  [3, "Schnitte", "view"],
  [3, "Innenansichten", "interiorView"],
  [3, "Details", "detailView"],
  [3, "Arbeitsblätter", "sheetView"],
  [3, "3D-Dokumente", "doc3d"],
  [3, "3D", "cubeView", "closed"],
  [2, "Vorentwurfsplanung", "folder", "closed"],
  [2, "Entwurfsplanung", "folder", "closed"],
  [2, "Genehmigungsplan", "folder", "closed"],
];

/* ---------- status bar ---------- */

const StatusBar = styled.footer`
  display: flex;
  flex: none;
  align-items: center;
  height: 18px;
  padding: 0 7px 0 4px;
  white-space: nowrap;
  background: linear-gradient(#ececec, #d6d6d6);
`;

const Brand = styled.div`
  display: flex;
  align-items: center;
  gap: 4px;
  margin-left: auto;
  font-family: Lato, sans-serif;
  font-size: 10px;
  font-weight: 400;
  color: #3a4046;
  b { font-weight: 700; }
`;

/* ---------- toolbar content ---------- */

// "|" is a divider, "v" a menu arrow, "V" an active menu arrow, "+" marks active and "-" disabled tools
const TOOLS =
  "save | undo -redo | find pipette syringe -arrange | snap +triangle V +guide V +coord V grid v plane planeV planeEdit weight v ruler +nodes | cut hammer -align -corner -curve -resize -home | -dimH -dimBox | star +stack flag flagList cloud houseCheck houses frame info paint tag | view3d v circleA v".split(" ");

const QUICK: [icon: string, label: string][] = [
  ["zoomFit", "keine Daten"], ["tilt", "keine Daten"], ["scale", "1:100"], ["layers", "00 Arbeit..."],
  ["hatch", "Komplette..."], ["pen", "04 S/W 1:..."], ["structure", "00 Arbeit..."], ["override", "90 Prüfun..."],
  ["reno", "00 Reiner..."], ["houses", "Nur Haup..."], ["style", "Schattier..."],
];

export default function App() {
  return (
    <Shell>
      <GlobalStyle />
      <Toolbar>
        <ToolRow>
          <Grip />
          {TOOLS.map((t, i) => {
            if (t === "|") return <Divider key={i} />;
            if (t === "v" || t === "V")
              return (
                <ToolButton key={i} $slim $on={t === "V"} aria-label="Menü">
                  <Chevron down />
                </ToolButton>
              );
            const name = t.replace(/^[+-]/, "");
            return (
              <ToolButton key={i} $on={t[0] === "+"} $off={t[0] === "-"} aria-label={name}>
                <Icon name={name} />
              </ToolButton>
            );
          })}
        </ToolRow>
      </Toolbar>
      <InfoBox>
        <span>Haupt:</span>
        <InfoTools>
          <Grip $tall />
          <InfoButton aria-label="Geometrie"><Icon name="selPoly" /><Chevron /></InfoButton>
          <InfoButton aria-label="Auswahl"><Icon name="selRect" /><Chevron /></InfoButton>
          <InfoButton $on aria-label="Magnet"><Icon name="magnet" /></InfoButton>
          <InfoButton $large aria-label="Pfeil"><Icon name="arrow" /><Chevron /></InfoButton>
        </InfoTools>
      </InfoBox>

      <Workspace>
        <Toolbox>
          <Handle $w={41} />
          <ToolList>
            <ToolRows tools={[["Pfeil", "arrow"], ["Markierungsrah...", "marquee"]]} />
            <GroupHeader>Planung</GroupHeader>
            <ToolRows tools={PLAN} />
            <GroupHeader>Sichten</GroupHeader>
            <ToolRows tools={VIEWS} off />
            <GroupHeader>Dokumentation</GroupHeader>
            <ToolRows tools={DOCS} off />
          </ToolList>
          <ToolScroll />
        </Toolbox>

        <Centre>
          <TabBar role="tablist">
            <TabOverview aria-label="Übersicht"><Icon name="overview" /></TabOverview>
            <Tab role="tab"><Icon name="storey" />(!) 0. EG [0. EG]</Tab>
            <Tab role="tab" $on><Icon name="box3d" />[3D / Auswahl, Geschoss 0]</Tab>
            <Tab role="tab" $end><Icon name="tower" />[Aktions-Center]</Tab>
            <TabRest />
            <TabMenu aria-label="Ansicht wählen"><Icon name="houseList" /><Chevron down /></TabMenu>
          </TabBar>
          <Viewport>
            <Model />
            <Tabber $side="top" />
            <Tabber $side="bottom" />
            <Tabber $side="left" />
            <Tabber $side="right" />
          </Viewport>
          <QuickBar>
            <QuickNav $w={55}>
              <NavButton aria-label="Zurück"><Icon name="zoomBack" /></NavButton>
              <NavButton $off aria-label="Vor"><Icon name="zoomFwd" /></NavButton>
              <NavButton aria-label="Vergrößern"><Icon name="zoomIn" /></NavButton>
            </QuickNav>
            <QuickNav $w={39}>
              <NavButton aria-label="Orbit"><Icon name="orbit" /></NavButton>
              <NavButton aria-label="Gehen"><Icon name="walk" /></NavButton>
            </QuickNav>
            {QUICK.map(([icon, label], i) => (
              <QuickOption key={i} $off={label === "keine Daten"} $centre={label === "1:100"}>
                <Icon name={icon} />
                <span>{label}</span>
                <Chevron />
              </QuickOption>
            ))}
          </QuickBar>
        </Centre>

        <Navigator>
          <Handle $w={54} />
          <NavTabs>
            <ToolButton aria-label="Projekt-Mappe"><Icon name="house" /></ToolButton>
            <Divider />
            <ToolButton $on aria-label="Ausschnitt-Mappe"><Icon name="houseFrame" /></ToolButton>
            <ToolButton aria-label="Layoutbuch"><Icon name="layout" /></ToolButton>
            <ToolButton aria-label="Publisher"><Icon name="books" /></ToolButton>
            <NavMenu aria-label="Menü"><Icon name="menu" /><Chevron /></NavMenu>
          </NavTabs>
          <SearchField>
            <Icon name="search" />
            <input type="search" placeholder="Ausschnitt-Mappe durch" aria-label="Suche" />
          </SearchField>
          <TreeFrame>
            <Tree>
              {TREE.map(([level, label, icon, toggle]) => (
                <TreeRow key={label} $level={level} $on={label === "0. EG"}>
                  <TreeToggle>{toggle && <Chevron soft down={toggle === "open"} />}</TreeToggle>
                  <Icon name={icon} />
                  <span>{label}</span>
                </TreeRow>
              ))}
            </Tree>
            <VScroll />
          </TreeFrame>
          <HScroll />
          <IconRow $h={26}>
            <ToolButton aria-label="Ausschnitt sichern"><Icon name="saveView" /></ToolButton>
            <ToolButton aria-label="Ordner klonen"><Icon name="cloneView" /></ToolButton>
            <ToolButton aria-label="Neuer Ordner"><Icon name="addFolder" /></ToolButton>
            <ToolButton aria-label="Einstellungen"><Icon name="props" /></ToolButton>
            <ToolButton aria-label="Löschen"><Icon name="remove" /></ToolButton>
          </IconRow>
          <GroupHeader $inset>Beschreibungen</GroupHeader>
          <Props>
            <PropRow>
              <Icon name="storey" />
              <Field $w={24} defaultValue="0." aria-label="Nummer" />
              <Field defaultValue="EG" aria-label="Name" />
            </PropRow>
            <PropRow><Icon name="layers" />00 Arbeitseinstellung</PropRow>
            <PropRow><Icon name="scale" />1:100</PropRow>
            <PropRow><Icon name="structure" />00 Arbeitseinstellung</PropRow>
          </Props>
          <SettingsButton>Einstellungen...</SettingsButton>
          <Rule />
          <Handle $w={54} $gap={3} />
          <TraceRow>
            <SoftButton $w={22} aria-label="Transparentpause"><Icon name="trace" /></SoftButton>
            <SoftButton><Icon name="storeyPlain" /><span>0. EG</span><Chevron /></SoftButton>
          </TraceRow>
          <IconRow $off $h={28}>
            <ToolButton $off aria-label="Referenz"><Icon name="traceRef" /></ToolButton>
            <Spacer $w={23} />
            <ToolButton $off aria-label="Bewegen"><Icon name="traceMove" /></ToolButton>
            <ToolButton $off aria-label="Drehen"><Icon name="traceRotate" /></ToolButton>
            <ToolButton $off aria-label="Tauschen"><Icon name="traceSwap" /></ToolButton>
            <ToolButton $off aria-label="Aktualisieren"><Icon name="refresh" /></ToolButton>
          </IconRow>
          <Rule />
          <IconRow $off $h={23}><TraceLabel htmlFor="trace">Transparentpause:</TraceLabel></IconRow>
          <TraceRow>
            <SoftButton $w={22} $pair aria-label="Farbe"><Icon name="swatch" /><Chevron /></SoftButton>
            <Slider id="trace" type="range" defaultValue={100} />
            <SoftButton $w={10} aria-label="Mehr"><Chevron /></SoftButton>
          </TraceRow>
          <IconRow $off $h={19}><TraceLabel htmlFor="active">Aktiv:</TraceLabel></IconRow>
          <TraceRow>
            <SoftButton $w={22} $pair aria-label="Farbe aktiv"><Icon name="pie" /><Chevron /></SoftButton>
            <Slider id="active" type="range" defaultValue={100} />
            <Spacer $w={10} />
          </TraceRow>
          <IconRow $off $h={4} />
          <Rule />
          <IconRow $off $h={28} $start={24}>
            <ToolButton $off aria-label="Verschieben"><Icon name="hand" /></ToolButton>
            <ToolButton $off aria-label="Überlagern"><Icon name="overlap" /></ToolButton>
            <ToolButton $off aria-label="Spiegeln"><Icon name="mirror" /></ToolButton>
            <ToolButton $off aria-label="Ausblenden"><Icon name="hatchEye" /></ToolButton>
          </IconRow>
        </Navigator>
      </Workspace>

      <StatusBar>
        <span>
          Klicken Sie mit dem Cursor auf ein Element oder ziehen Sie einen Auswahlbereich auf. Drücken Sie für
          Morphbearbeitung Strg/Ctrl+Umsch, um zwischen Element-/Unterelement-Auswahl zu wechseln.
        </span>
        <Brand>
          <Icon name="windows" />
          <Divider />
          <span><b>GRAPHISOFT</b> ID</span>
        </Brand>
      </StatusBar>
    </Shell>
  );
}
